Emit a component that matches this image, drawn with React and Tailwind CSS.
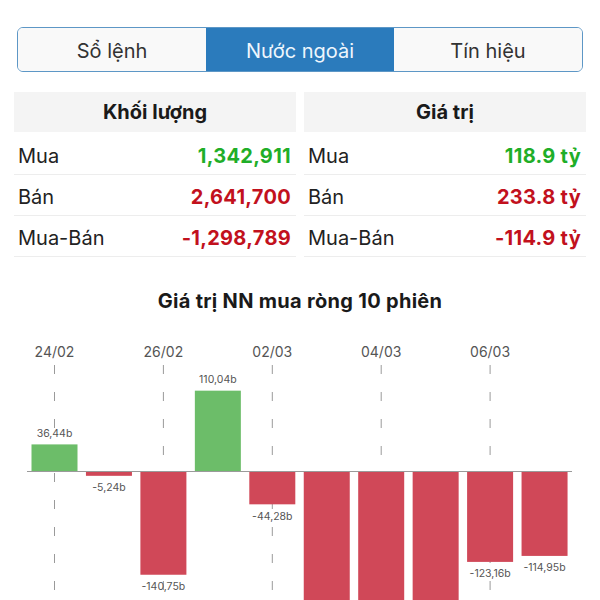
import React from "react";

const tabs = ["Sổ lệnh", "Nước ngoài", "Tín hiệu"];

const left = [
  ["Mua", "1,342,911", "g"],
  ["Bán", "2,641,700", "r"],
  ["Mua-Bán", "-1,298,789", "r"],
];
const right = [
  ["Mua", "118.9 tỷ", "g"],
  ["Bán", "233.8 tỷ", "r"],
  ["Mua-Bán", "-114.9 tỷ", "r"],
];

function Panel({ title, rows }) {
  return (
    <div className="flex flex-col">
      <div className="h-[40px] mb-[2px] bg-[#f4f4f4] flex items-center justify-center text-[20px] font-bold text-[#1a1a1a]">
        {title}
      </div>
      {rows.map(([l, v, c]) => (
        <div
          key={l}
          className="h-[41px] border-b border-[#ededed] flex items-center justify-between pl-[4px] pr-[5px] pt-[3px] text-[20px]"
        >
          <span className="text-[#222]">{l}</span>
          <span className={"font-bold tracking-[0.3px] " + (c === "g" ? "text-[#1fae28]" : "text-[#c2111d]")}>{v}</span>
        </div>
      ))}
    </div>
  );
}

const values = [36.44, -5.24, -140.75, 110.04, -44.28, -260, -270, -255, -123.16, -114.95];
const labels = ["36,44b", "-5,24b", "-140,75b", "110,04b", "-44,28b", null, null, null, "-123,16b", "-114,95b"];
const dates = ["24/02", "26/02", "02/03", "04/03", "06/03"];

function Chart() {
  const top = 322;
  const zero = 471 - top;
  const scale = 0.73;
  const bw = 46;
  const xs = values.map((_, i) => 31.5 + i * 54.45);
  return (
    <svg width="600" height={600 - top} className="block" style={{ fontFamily: "Inter, 'Liberation Sans', sans-serif" }}>
      {[0, 2, 4, 6, 8].map((bi, k) => {
        const cx = xs[bi] + bw / 2;
        return (
          <g key={bi}>
            <text x={cx} y={352 - top + 5} textAnchor="middle" fontSize="14" fill="#555">
              {dates[k]}
            </text>
            <line x1={cx} x2={cx} y1={365 - top} y2={600 - top} stroke="#9a9a9a" strokeWidth="1" strokeDasharray="9 18" />
          </g>
        );
      })}
      <line x1="27" x2="572" y1={zero + 0.5} y2={zero + 0.5} stroke="#9a9a9a" strokeWidth="1.2" />
      {values.map((v, i) => {
        const h = Math.abs(v) * scale;
        const y = v >= 0 ? zero - h : zero + 1;
        return (
          <rect key={i} x={xs[i]} y={y} width={bw} height={h} fill={v >= 0 ? "#6cbd69" : "#d04858"} />
        );
      })}
      {values.map((v, i) => {
        if (!labels[i]) return null;
        const h = Math.abs(v) * scale;
        const cy = v >= 0 ? zero - h - 11 : zero + h + 13;
        return (
          <text key={i} x={xs[i] + bw / 2} y={cy + 3.5} textAnchor="middle" fontSize="10.5" fill="#555">
            {labels[i]}
          </text>
        );
      })}
    </svg>
  );
}

export default function App() {
  return (
    <div className="w-[600px] h-[600px] overflow-hidden bg-white" style={{ fontFamily: "Inter, 'Liberation Sans', sans-serif" }}>
      <div className="pt-[27px] px-[17px]">
        <div className="h-[45px] flex border-[1.5px] border-[#5d97c6] rounded-[6px] overflow-hidden">
          {tabs.map((t, i) => (
            <div
              key={t}
              className={
                "flex-1 flex items-center justify-center pt-[3px] text-[20px] " +
                (i === 1 ? "bg-[#2b7bbc] text-[#eef6fd]" : "bg-[#f9f9f9] text-[#333]")
              }
            >
              {t}
            </div>
          ))}
        </div>
      </div>
      <div className="mt-[20px] px-[14px] grid grid-cols-2 gap-2">
        <Panel title="Khối lượng" rows={left} />
        <Panel title="Giá trị" rows={right} />
      </div>
      <div className="mt-[32px] text-center text-[20px] font-bold text-[#1a1a1a] leading-[24px] tracking-[0.3px]">
        Giá trị NN mua ròng 10 phiên
      </div>
      <div className="mt-[9px]">
        <Chart />
      </div>
    </div>
  );
}
